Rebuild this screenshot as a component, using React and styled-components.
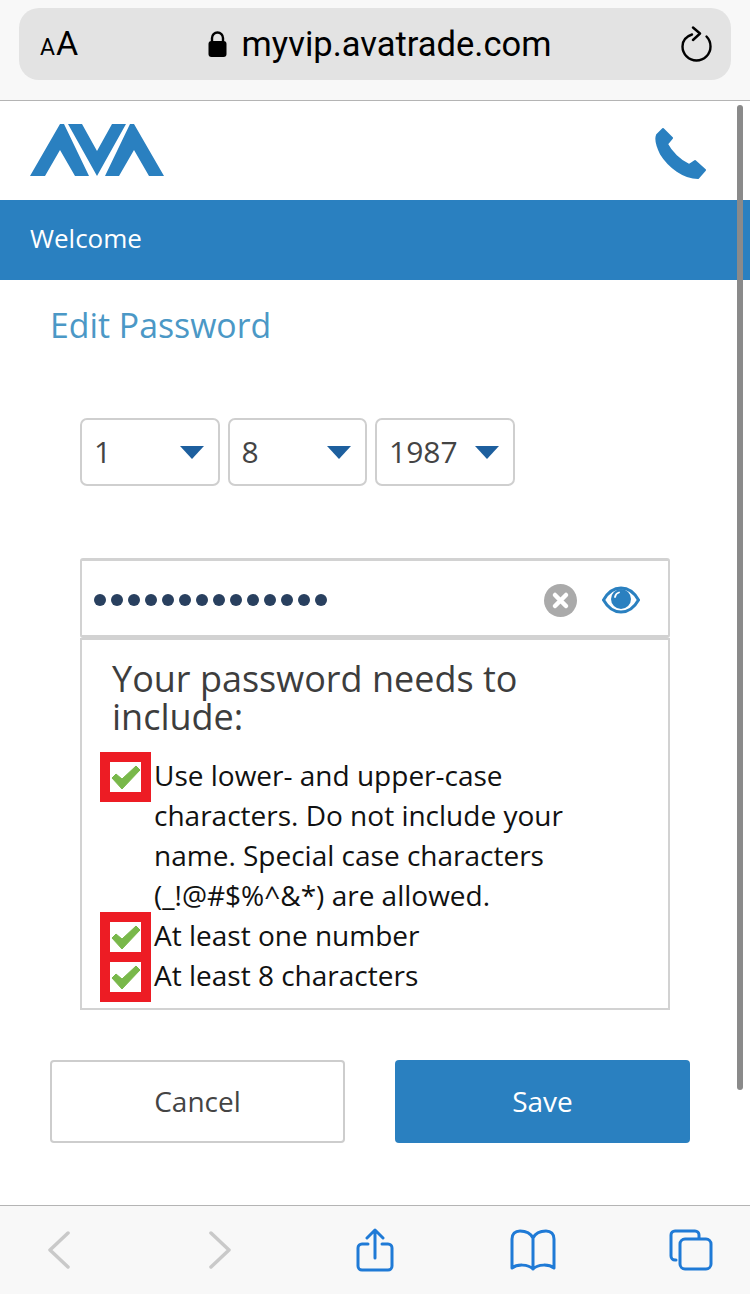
import React from "react";
import styled, { createGlobalStyle } from "styled-components";

const Global = createGlobalStyle`
  html, body { margin: 0; padding: 0; background: #fff; }
  * { box-sizing: border-box; }
`;
const Page = styled.div`
  position: relative; width: 750px; height: 1294px; overflow: hidden;
  display: flex; flex-direction: column; background: #fff;
  font-family: "Open Sans", sans-serif;
`;
const BrowserTop = styled.div`
  height: 101px; background: #f8f8f8; border-bottom: 1px solid #b4b4b4; padding: 8px 19px 0;
`;
const AddressBar = styled.div`
  height: 72px; border-radius: 20px; background: #e3e3e3; padding: 0 18px 0 21px;
  display: flex; align-items: center; justify-content: space-between; color: #000;
  font-family: Roboto, sans-serif;
`;
const TextSize = styled.div`
  width: 40px; display: flex; align-items: baseline; font-size: 34px; line-height: 34px; margin-top: 2px;
  small { font-size: 23px; margin-right: 1px; }
`;
const Url = styled.div`
  display: flex; align-items: center; gap: 15px; font-size: 34.5px; line-height: 40px; margin-left: -2px;
`;
const Header = styled.header`
  height: 99px; padding: 23px 43px 0 30px; display: flex; justify-content: space-between; align-items: flex-start;
`;
const PhoneWrap = styled.div` margin-top: 3px; line-height: 0; `;
const Banner = styled.div`
  height: 80px; background: #2a80c0; color: #fff; font-size: 26px; padding: 0 0 4px 30px;
  display: flex; align-items: center;
`;
const Title = styled.h1`
  margin: 23px 0 0 50px; font-weight: 400; font-size: 33.8px; line-height: 44px; color: #4b98c6;
`;
const Form = styled.div` padding: 71px 80px 0; `;
const DateRow = styled.div` display: flex; gap: 8px; `;
const Select = styled.div`
  width: 139.5px; height: 68px; border: 2px solid #cfcfcf; border-radius: 7px;
  display: flex; align-items: center; justify-content: space-between;
  padding: 0 14px 2px 12px; font-size: 30px; color: #444;
`;
const Arrow = styled.span`
  width: 0; height: 0; margin-top: 2px; border-left: 12px solid transparent; border-right: 12px solid transparent;
  border-top: 13px solid #1d5f9e;
`;
const PasswordField = styled.div`
  margin-top: 72px; height: 80px; border: 2px solid #d2d2d2; border-top-width: 3px; border-bottom-width: 3px;
  border-radius: 3px; display: flex; align-items: center; padding: 4px 28px 0 12px;
`;
const Dots = styled.div` display: flex; gap: 5px; flex: 1; `;
const Dot = styled.span` width: 12px; height: 12px; border-radius: 50%; background: #29405f; `;
const FieldIcons = styled.div` display: flex; align-items: center; gap: 25px; line-height: 0; `;
const Panel = styled.div`
  height: 372px; border: 2px solid #d2d2d2; padding: 20px 80px 0 29px;
`;
const PanelTitle = styled.h2`
  margin: 0 0 19px 1px; font-weight: 400; font-size: 36px; line-height: 38px; color: #3d3d3d;
`;
const List = styled.ul` list-style: none; margin: 0; padding: 0; `;
const Item = styled.li`
  display: flex; gap: 13px; font-size: 28px; line-height: 40px; color: #111;
`;
const CheckBox = styled.span`
  flex: none; width: 31px; height: 30px; margin-top: 7px; margin-left: -1px; background: #fff; outline: 10px solid #ed1c24;
  display: flex; align-items: center; justify-content: center; position: relative;
`;
const Actions = styled.div`
  display: flex; justify-content: space-between; padding: 50px 60px 0 50px;
`;
const Button = styled.button`
  width: 295px; height: 83px; border-radius: 4px; font: inherit; font-size: 28px; padding: 0 0 2px;
  border: ${p => (p.$primary ? "none" : "2px solid #cdcdcd")};
  background: ${p => (p.$primary ? "#2a80c0" : "#fff")};
  color: ${p => (p.$primary ? "#fff" : "#444")};
`;
const BottomBar = styled.div`
  margin-top: auto; height: 89px; background: #f8f8f8; border-top: 1px solid #b4b4b4;
  position: relative; display: flex; align-items: center; justify-content: space-between; padding: 0 37px 0 47px;
`;
const ScrollThumb = styled.div`
  position: absolute; left: 737px; top: 105px; width: 6px; height: 985px; border-radius: 3px; background: #8a8a8a;
`;
const ToolGroup = styled.div` display: flex; align-items: center; gap: ${p => p.$gap}px; `;
const ToolSlot = styled.div` display: flex; margin-left: ${p => p.$ml}px; `;

const Logo = () => (
  <svg width="134" height="52" viewBox="30 124 134 52">
    <g fill="#2a80c0">
      <polygon points="30,176 60,124 64,124 89,176 75,176 60,150 45,176" />
      <polygon points="68,124 82,124 97,151 112,124 126,124 97,176" />
      <polygon points="164,176 134,124 130,124 105,176 119,176 134,150 149,176" />
    </g>
  </svg>
);
const Phone = () => (
  <svg width="52" height="53" viewBox="-1 -1 52 53">
    <path fill="#2a80c0" stroke="#2a80c0" strokeWidth="2" strokeLinejoin="round"
      d="M7 1 L16 10 L11 16 C15 24 24 33 33 37 L39 33 L49 42 L42 50 C28 50 13 39 5 26 C1 18 -1 12 1 7 Z" />
  </svg>
);
const Lock = () => (
  <svg width="19" height="26" viewBox="0 0 19 26">
    <path d="M4 11V7a5.500 5.500 0 0 1 11 0v4" fill="none" stroke="#000" strokeWidth="2.400" />
    <rect x="0.500" y="10" width="18" height="16" rx="3" fill="#000" />
  </svg>
);
const Reload = () => (
  <svg width="32" height="36" viewBox="0 0 32 36" fill="none" stroke="#000" strokeWidth="2.400" strokeLinecap="round" strokeLinejoin="round">
    <path d="M11 8.500C5 10.500 1.500 15 1.500 20.500a14 14 0 0 0 28 0c0-4-1.500-7.500-4-10" />
    <path d="M12 1.500l7 6-7 6.500" />
  </svg>
);
const ClearIcon = () => (
  <svg width="33" height="33" viewBox="0 0 33 33">
    <circle cx="16.500" cy="16.500" r="16.500" fill="#aaa" />
    <path d="M11 11l11 11M22 11L11 22" stroke="#fff" strokeWidth="4.500" strokeLinecap="round" />
  </svg>
);
const Eye = () => (
  <svg width="38" height="28" viewBox="0 0 38 28">
    <path d="M1.500 14C6 6 12 2 19 2s13 4 17.500 12C32 22 26 26 19 26S6 22 1.500 14Z" fill="none" stroke="#2a80c0" strokeWidth="3" />
    <circle cx="19" cy="13" r="10" fill="#2a80c0" />
    <path d="M13 11c.5-2.500 2-4 4-4.500" stroke="#fff" strokeWidth="1.800" fill="none" strokeLinecap="round" />
  </svg>
);
const Check = () => (
  <svg width="30" height="25" viewBox="0 0 30 25">
    <path d="M1 13l4-4 6 5L25 1l4 4-18 19Z" fill="#79b84a" stroke="#79b84a" strokeLinejoin="round" />
  </svg>
);
const Chevron = ({ flip }) => (
  <svg width="24" height="38" viewBox="0 0 24 38" style={flip ? { transform: "scaleX(-1)" } : undefined}>
    <path d="M21 2L3 19l18 17" fill="none" stroke="#c9c9c9" strokeWidth="3.500" strokeLinecap="round" strokeLinejoin="round" />
  </svg>
);
const blue = "#1f7ad6";
const BarIcon = ({ w, h, children }) => (
  <svg width={w} height={h} viewBox={`0 0 ${w} ${h}`} fill="none" stroke={blue} strokeWidth="3" strokeLinecap="round" strokeLinejoin="round">
    {children}
  </svg>
);

export default function App() {
  return (
    <Page>
      <Global />
      <BrowserTop>
        <AddressBar>
          <TextSize><small>A</small>A</TextSize>
          <Url><Lock />myvip.avatrade.com</Url>
          <Reload />
        </AddressBar>
      </BrowserTop>
      <Header>
        <Logo />
        <PhoneWrap><Phone /></PhoneWrap>
      </Header>
      <Banner>Welcome</Banner>
      <Title>Edit Password</Title>
      <Form>
        <DateRow>
          <Select>1<Arrow /></Select>
          <Select>8<Arrow /></Select>
          <Select>1987<Arrow /></Select>
        </DateRow>
        <PasswordField>
          <Dots>{Array.from({ length: 14 }, (_, i) => <Dot key={i} />)}</Dots>
          <FieldIcons><ClearIcon /><Eye /></FieldIcons>
        </PasswordField>
        <Panel>
          <PanelTitle>Your password needs to include:</PanelTitle>
          <List>
            <Item><CheckBox><Check /></CheckBox><span>Use lower- and upper-case characters. Do not include your name. Special case characters (_!@#$%^&amp;*) are allowed.</span></Item>
            <Item><CheckBox><Check /></CheckBox><span>At least one number</span></Item>
            <Item><CheckBox><Check /></CheckBox><span>At least 8 characters</span></Item>
          </List>
        </Panel>
      </Form>
      <Actions>
        <Button>Cancel</Button>
        <Button $primary>Save</Button>
      </Actions>
      <BottomBar>
        <ToolGroup $gap={137}><Chevron /><Chevron flip /></ToolGroup>
        <ToolGroup $gap={0}>
          <ToolSlot $ml={0}>
            <BarIcon w={38} h={44}>
              <path d="M12 16H6a4 4 0 0 0-4 4v18a4 4 0 0 0 4 4h26a4 4 0 0 0 4-4V20a4 4 0 0 0-4-4h-6" />
              <path d="M19 30V2M11 10l8-8 8 8" />
            </BarIcon>
          </ToolSlot>
          <ToolSlot $ml={115}>
            <BarIcon w={48} h={42}>
              <path d="M24 9C21 3 16 2 11 2 6 2 3 5 3 10v29c5-4 16-4 21 1 5-5 16-5 21-1V10c0-5-3-8-8-8-5 0-10 1-13 7Zm0 0v31" />
            </BarIcon>
          </ToolSlot>
          <ToolSlot $ml={112}>
            <BarIcon w={44} h={42}>
              <path d="M7 31H6a4 4 0 0 1-4-4V6a4 4 0 0 1 4-4h20a4 4 0 0 1 4 4v3" />
              <rect x="11" y="10" width="31" height="30" rx="5" />
            </BarIcon>
          </ToolSlot>
        </ToolGroup>
      </BottomBar>
      <ScrollThumb />
    </Page>
  );
}
